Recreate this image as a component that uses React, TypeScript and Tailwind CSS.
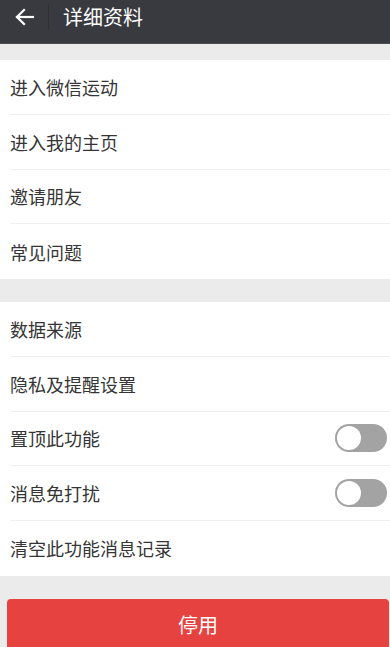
import React from "react";

const font = { fontFamily: '"Noto Sans CJK SC", "Noto Sans", sans-serif' };

function Row({ label, toggle, last }: { label: string; toggle?: boolean; last?: boolean }) {
  return (
    <div className="pl-[10px] bg-white">
      <div className={`h-[54.75px] flex items-center justify-between pr-[3px] ${last ? "" : "border-b border-[#efefef]"}`}>
        <span className="text-[18px] text-[#353535] leading-none">{label}</span>
        {toggle && (
          <div className="w-[52px] h-[28px] rounded-full bg-[#a3a3a3] relative">
            <div className="absolute left-[2px] top-[2px] w-[24px] h-[24px] rounded-full bg-white" />
          </div>
        )}
      </div>
    </div>
  );
}

export default function App() {
  return (
    <div className="w-[390px] h-[647px] overflow-hidden bg-[#ebebeb]" style={font}>
      <div className="h-[44px] bg-[#393a3f] flex items-center border-b border-[#4b4b50]">
        <div className="w-[48px] h-full flex items-center justify-center pb-[9px]">
          <svg width="20" height="20" viewBox="0 0 20 20" fill="none" stroke="white" strokeWidth="2.2" strokeLinecap="square">
            <path d="M19 10H3" />
            <path d="M10 3L3 10l7 7" />
          </svg>
        </div>
        <div className="w-px h-[26px] bg-[#2f3034] self-start mt-[4px]" />
        <span className="ml-[14px] text-white text-[20px] leading-none pb-[9px]">详细资料</span>
      </div>
      <div className="h-[16px]" />
      <div>
        <Row label="进入微信运动" />
        <Row label="进入我的主页" />
        <Row label="邀请朋友" />
        <Row label="常见问题" last />
      </div>
      <div className="h-[23px]" />
      <div>
        <Row label="数据来源" />
        <Row label="隐私及提醒设置" />
        <Row label="置顶此功能" toggle />
        <Row label="消息免打扰" toggle />
        <Row label="清空此功能消息记录" last />
      </div>
      <div className="h-[23px]" />
      <div className="ml-[7px] mr-[1px] h-[60px] bg-[#e64340] rounded-[4px] flex items-start justify-center pt-[16px] border-b-[3px] border-[#7a2220]">
        <span className="text-white text-[20px] leading-none">停用</span>
      </div>
    </div>
  );
}
